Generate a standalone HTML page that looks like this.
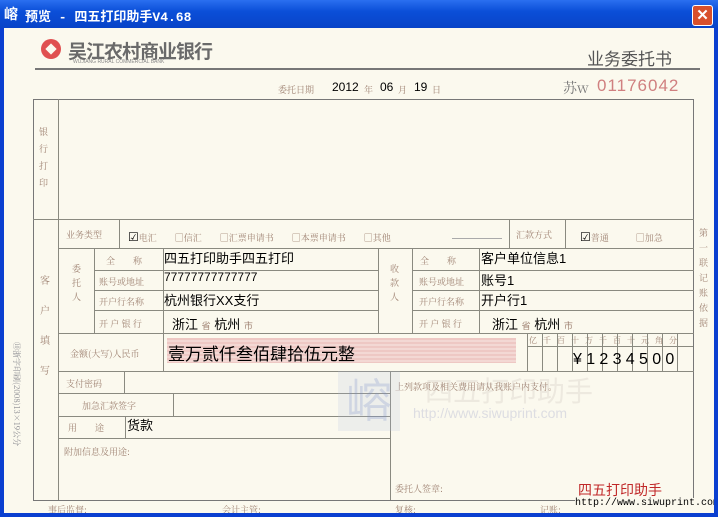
<!DOCTYPE html>
<html><head><meta charset="utf-8"><style>
*{margin:0;padding:0;box-sizing:border-box}
body{width:718px;height:517px;overflow:hidden;background:#0a3fd0;font-family:"Liberation Sans","Noto Sans CJK SC",sans-serif;position:relative}
.a{position:absolute}
.t{position:absolute;white-space:nowrap;color:#a08474;font-size:9px;font-family:"Noto Serif CJK SC","Liberation Serif",serif}
.k{position:absolute;white-space:nowrap;color:#000;font-size:13px;font-family:"Liberation Sans","Noto Sans CJK SC",sans-serif}
.h{position:absolute;height:1px;background:#8a8a80}
.v{position:absolute;width:1px;background:#8a8a80}
</style></head><body>
<div class="a" style="left:0;top:0;width:718px;height:28px;background:linear-gradient(#2a6ff0,#0b4fd8 40%,#0843c8)"></div>
<div class="a" style="left:4px;top:6px;width:16px;height:16px;color:#fff;font-size:14px;line-height:16px;font-weight:bold">嵱</div>
<div class="a" style="left:25px;top:6px;color:#fff;font-size:13px;font-weight:bold;font-family:'Liberation Mono','Noto Sans CJK SC',monospace">预览 - 四五打印助手V4.68</div>
<div class="a" style="left:692px;top:5px;width:21px;height:21px;background:#d8502c;border:1px solid #fff;border-radius:3px;color:#fff;font-size:15px;text-align:center;line-height:19px;font-weight:bold">✕</div>
<div class="a" style="left:4px;top:28px;width:710px;height:485px;background:#fbf9ee"></div>
<!-- header -->
<div class="a" style="left:41px;top:39px;width:20px;height:20px;border-radius:50%;background:#e05050"></div>
<div class="a" style="left:47px;top:45px;width:8px;height:8px;background:#fbf9ee;transform:rotate(45deg)"></div>
<div class="a" style="left:68px;top:37px;font-size:19px;color:#6a6a6a;font-weight:bold;font-family:'Noto Sans CJK SC',sans-serif;letter-spacing:-1px">吴江农村商业银行</div>
<div class="a" style="left:73px;top:59px;font-size:5px;color:#888">WUJIANG RURAL COMMERCIAL BANK</div>
<div class="a" style="left:587px;top:45px;font-size:17px;color:#555;font-family:'Noto Sans CJK SC',sans-serif">业务委托书</div>
<div class="h" style="left:35px;top:68px;width:665px;height:2px;background:#777"></div>
<div class="t" style="left:278px;top:83px">委托日期</div>
<div class="k" style="left:332px;top:80px;font-size:12px">2012</div><div class="t" style="left:364px;top:83px">年</div>
<div class="k" style="left:380px;top:80px;font-size:12px">06</div><div class="t" style="left:398px;top:83px">月</div>
<div class="k" style="left:414px;top:80px;font-size:12px">19</div><div class="t" style="left:432px;top:83px">日</div>
<div class="a" style="left:563px;top:78px;font-size:14px;color:#777;font-family:'Noto Serif CJK SC',serif">苏w</div>
<div class="a" style="left:597px;top:76px;font-size:17px;color:#d08080;font-family:'Liberation Sans',sans-serif;letter-spacing:1px">01176042</div>
<!-- table -->
<div class="a" style="left:33px;top:99px;width:661px;height:402px;border:1px solid #777"></div>
<div class="v" style="left:58px;top:99px;height:401px"></div>
<div class="t" style="left:39px;top:123px;width:10px;line-height:17px;white-space:normal">银行打印</div>
<div class="h" style="left:33px;top:219px;width:661px"></div>
<div class="h" style="left:58px;top:248px;width:636px"></div>
<div class="h" style="left:94px;top:270px;width:284px"></div><div class="h" style="left:412px;top:270px;width:282px"></div>
<div class="h" style="left:94px;top:290px;width:284px"></div><div class="h" style="left:412px;top:290px;width:282px"></div>
<div class="h" style="left:94px;top:310px;width:284px"></div><div class="h" style="left:412px;top:310px;width:282px"></div>
<div class="h" style="left:58px;top:333px;width:636px"></div>
<div class="h" style="left:58px;top:371px;width:636px"></div>
<div class="h" style="left:58px;top:393px;width:332px"></div>
<div class="h" style="left:58px;top:416px;width:332px"></div>
<div class="h" style="left:58px;top:438px;width:332px"></div>
<div class="v" style="left:119px;top:219px;height:29px"></div>
<div class="v" style="left:509px;top:219px;height:29px"></div>
<div class="v" style="left:565px;top:219px;height:29px"></div>
<div class="v" style="left:94px;top:248px;height:85px"></div>
<div class="v" style="left:163px;top:248px;height:123px"></div>
<div class="v" style="left:378px;top:248px;height:85px"></div>
<div class="v" style="left:412px;top:248px;height:85px"></div>
<div class="v" style="left:479px;top:248px;height:85px"></div>
<div class="v" style="left:390px;top:371px;height:129px"></div>
<div class="v" style="left:124px;top:371px;height:22px"></div>
<div class="v" style="left:173px;top:393px;height:23px"></div>
<div class="v" style="left:125px;top:416px;height:22px"></div>
<!-- labels -->
<div class="t" style="left:40px;top:265px;width:10px;line-height:30px;white-space:normal;font-size:10px">客户填写</div>
<div class="t" style="left:66px;top:228px">业务类型</div>
<div class="t" style="left:128px;top:228px"><span style="color:#000;font-size:12px">☑</span>电汇　　□信汇　　□汇票申请书　　□本票申请书　　□其他</div>
<div class="h" style="left:452px;top:238px;width:50px;background:#aaa"></div>
<div class="t" style="left:516px;top:228px">汇款方式</div>
<div class="t" style="left:580px;top:228px"><span style="color:#000;font-size:12px">☑</span>普通　　　□加急</div>
<div class="t" style="left:72px;top:262px;width:10px;line-height:14px;white-space:normal">委托人</div>
<div class="t" style="left:390px;top:262px;width:10px;line-height:14px;white-space:normal">收款人</div>
<div class="t" style="left:106px;top:254px">全　　称</div><div class="t" style="left:420px;top:254px">全　　称</div>
<div class="t" style="left:99px;top:275px">账号或地址</div><div class="t" style="left:419px;top:275px">账号或地址</div>
<div class="t" style="left:99px;top:295px">开户行名称</div><div class="t" style="left:419px;top:295px">开户行名称</div>
<div class="t" style="left:99px;top:317px">开 户 银 行</div><div class="t" style="left:419px;top:317px">开 户 银 行</div>
<div class="k" style="left:164px;top:248px">四五打印助手四五打印</div>
<div class="k" style="left:164px;top:270px;font-size:12px">77777777777777</div>
<div class="k" style="left:164px;top:290px">杭州银行XX支行</div>
<div class="k" style="left:172px;top:314px">浙江 <span style="color:#a08474;font-size:9px">省</span> 杭州 <span style="color:#a08474;font-size:9px">市</span></div>
<div class="k" style="left:481px;top:248px">客户单位信息1</div>
<div class="k" style="left:481px;top:270px">账号1</div>
<div class="k" style="left:481px;top:290px">开户行1</div>
<div class="k" style="left:492px;top:314px">浙江 <span style="color:#a08474;font-size:9px">省</span> 杭州 <span style="color:#a08474;font-size:9px">市</span></div>
<div class="t" style="left:70px;top:347px">金额(大写)人民币</div>
<div class="a" style="left:167px;top:338px;width:349px;height:25px;background:repeating-linear-gradient(#eec8c4 0,#eec8c4 2px,#f3d8d4 2px,#f3d8d4 4px)"></div>
<div class="k" style="left:168px;top:340px;font-size:17px">壹万贰仟叁佰肆拾伍元整</div>
<div class="h" style="left:527px;top:346px;width:166px"></div>
<div class="t" style="left:529px;top:335px;letter-spacing:6px;font-size:8px">亿千百十万千百十元角分</div>
<div class="v" style="left:527px;top:333px;height:38px"></div><div class="v" style="left:542px;top:333px;height:38px"></div>
<div class="v" style="left:557px;top:333px;height:38px"></div><div class="v" style="left:572px;top:333px;height:38px"></div>
<div class="v" style="left:587px;top:333px;height:38px"></div><div class="v" style="left:602px;top:333px;height:38px"></div>
<div class="v" style="left:617px;top:333px;height:38px"></div><div class="v" style="left:632px;top:333px;height:38px"></div>
<div class="v" style="left:647px;top:333px;height:38px"></div><div class="v" style="left:662px;top:333px;height:38px"></div>
<div class="v" style="left:677px;top:333px;height:38px"></div>
<div class="k" style="left:573px;top:351px;font-size:16px;letter-spacing:4.3px">¥1234500</div>
<div class="t" style="left:66px;top:377px">支付密码</div>
<div class="t" style="left:82px;top:399px">加急汇款签字</div>
<div class="t" style="left:68px;top:421px">用　　途</div>
<div class="k" style="left:127px;top:415px">货款</div>
<div class="t" style="left:64px;top:445px">附加信息及用途:</div>
<div class="t" style="left:395px;top:380px">上列款项及相关费用请从我账户内支付。</div>
<div class="t" style="left:395px;top:482px">委托人签章:</div>
<!-- watermark -->
<div class="a" style="left:338px;top:371px;width:62px;height:60px;background:rgba(180,190,220,.18);color:rgba(120,140,200,.25);font-size:46px;text-align:center;line-height:60px">嵱</div>
<div class="a" style="left:413px;top:405px;color:rgba(130,140,190,.25);font-size:14px">http://www.siwuprint.com</div>
<div class="a" style="left:425px;top:370px;color:rgba(160,140,140,.15);font-size:28px">四五打印助手</div>
<!-- side texts -->
<div class="t" style="left:699px;top:225px;width:10px;line-height:15px;white-space:normal">第一联　记账依据</div>
<div class="t" style="top:342px;transform:rotate(90deg);transform-origin:0 0;left:22px;font-size:8px;color:#8a8a90">⑩浙字印刷(2008)13×19公分</div>
<!-- bottom -->
<div class="t" style="left:48px;top:503px">事后监督:</div>
<div class="t" style="left:222px;top:503px">会计主管:</div>
<div class="t" style="left:395px;top:503px">复核:</div>
<div class="t" style="left:540px;top:503px">记账:</div>
<div class="a" style="left:578px;top:480px;color:#c02828;font-size:14px">四五打印助手</div>
<div class="a" style="left:575px;top:498px;color:#000;font-size:10px;font-family:'Liberation Mono',monospace;white-space:nowrap;background:#fbf9ee">http://www.siwuprint.com</div>
<div class="a" style="left:0;top:513px;width:718px;height:4px;background:#0a3fd0"></div>
<div class="a" style="left:714px;top:28px;width:4px;height:489px;background:#0a3fd0"></div>
</body></html>
